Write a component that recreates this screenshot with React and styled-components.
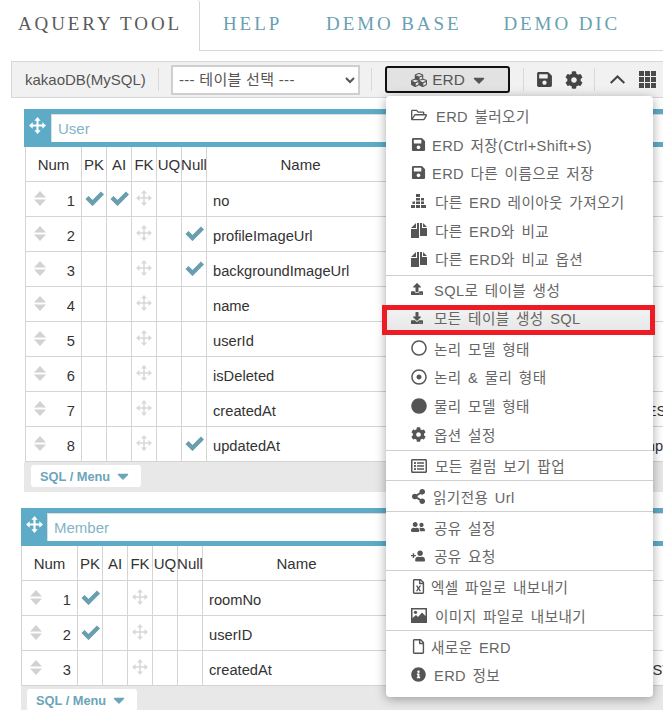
import React from 'react';
import styled, { createGlobalStyle } from 'styled-components';
import {
  FaCaretDown, FaCircle, FaCog, FaCubes, FaDownload, FaInfoCircle, FaRegCircle, FaRegDotCircle,
  FaRegFile, FaRegFileExcel, FaRegFolderOpen, FaRegListAlt, FaSave, FaShareAlt, FaUpload,
  FaUserFriends, FaUserPlus,
} from 'react-icons/fa';

const GlobalStyle = createGlobalStyle`
  html, body { margin: 0; padding: 0; background: #fff; }
  body { font-family: "Liberation Sans", "Noto Sans CJK KR", sans-serif; }
`;

const Page = styled.div`
  width: 663px;
  height: 710px;
  overflow: hidden;
`;

const TabBar = styled.div`
  display: flex;
  height: 51px;
`;

const Tab = styled.div`
  font-family: "Liberation Serif", serif;
  font-size: 19px;
  letter-spacing: 2.9px;
  line-height: 47px;
  white-space: nowrap;
  color: #6a9fb2;
  margin-right: ${(p) => p.$gap}px;
`;

const ActiveTab = styled(Tab)`
  width: 200px;
  margin: 0;
  padding-left: 18px;
  box-sizing: border-box;
  color: #5a5a5a;
  border-right: 1px solid #d6d6d6;
  border-top-right-radius: 3px;
`;

const TabRest = styled.div`
  flex: 1;
  display: flex;
  padding-left: 23px;
  border-bottom: 1px solid #d6d6d6;
`;

const Toolbar = styled.div`
  display: flex;
  align-items: center;
  width: 700px;
  height: 37px;
  box-sizing: border-box;
  margin: 10px 0 0 11px;
  background: #f1f1f1;
  border: 1px solid #d6d6d6;
  color: #555;
  font-size: 15px;
`;

const DbName = styled.span`
  margin-left: 13px;
  width: 133px;
`;

const Divider = styled.span`
  width: 1px;
  height: 23px;
  background: #d8d8d8;
  margin: ${(p) => p.$margin};
`;

const TableSelect = styled.select`
  width: 189px;
  height: 30px;
  box-sizing: border-box;
  background: #fff;
  border: 2px solid #cfcfcf;
  color: #555;
  font-family: "Liberation Sans", "Noto Sans CJK KR", sans-serif;
  font-size: 15px;
  letter-spacing: 0.3px;
  padding-left: 2px;
`;

const Dropdown = styled.div`
  position: relative;
  width: 125px;
`;

const ErdButton = styled.div`
  display: flex;
  align-items: center;
  justify-content: center;
  gap: 5px;
  height: 27px;
  box-sizing: border-box;
  padding-left: 4px;
  background: #e2e2e2;
  border: 2px solid #111;
  border-radius: 3px;
  color: #555;
  font-size: 15.4px;
`;

const ToolIcon = styled.span`
  display: flex;
  color: #444;
  font-size: ${(p) => p.$size}px;
  margin-left: ${(p) => p.$left}px;
`;

const Menu = styled.div`
  position: absolute;
  z-index: 5;
  top: 30px;
  left: 1px;
  width: 267px;
  box-sizing: border-box;
  padding: 5px 0 8px;
  background: #fff;
  border-radius: 4px;
  box-shadow: 0 2px 11px rgba(0, 0, 0, 0.35);
`;

const MenuGroup = styled.div`
  padding: 1px 0 0;
  &:first-child {
    padding: 0 0 1.8px;
  }
  &:nth-child(2) {
    padding: 0;
  }
  &:nth-child(2) > div {
    padding-bottom: 2px;
  }
  & + & {
    border-top: 1px solid #cfcfcf;
  }
`;

const MenuItem = styled.div`
  position: relative;
  display: flex;
  align-items: center;
  height: 28.7px;
  box-sizing: border-box;
  margin-bottom: ${(p) => (p.$marked ? '1.5px' : '0')};
  padding-left: 25px;
  color: #666;
  font-size: 14.6px;
  letter-spacing: 0.4px;
  word-spacing: 2px;
  white-space: nowrap;
  background: ${(p) => (p.$marked ? 'linear-gradient(#f5f5f5, #e6e6e6)' : 'transparent')};
`;

const MenuIcon = styled.span`
  display: flex;
  width: ${(p) => p.$slot}px;
  flex: none;
  color: #555;
  font-size: ${(p) => p.$size || 15}px;
`;

const Callout = styled.div`
  position: absolute;
  left: -4px;
  right: -2px;
  top: 0;
  bottom: -2px;
  border: 5px solid #ed1c24;
`;

const Canvas = styled.div`
  padding-top: 11px;
`;

const Entity = styled.div`
  width: 720px;
  margin-left: ${(p) => p.$left}px;
  margin-bottom: 16px;
`;

const EntityHead = styled.div`
  display: flex;
  align-items: center;
  height: 38px;
  box-sizing: border-box;
  padding-bottom: 1px;
  background: #5eabc7;
`;

const Grip = styled.span`
  display: flex;
  justify-content: center;
  flex: none;
  width: ${(p) => p.$width}px;
  color: #fff;
  margin-top: -4px;
`;

const NameInput = styled.input`
  flex: 1;
  height: 28px;
  box-sizing: border-box;
  padding: 0 6px;
  background: #fff;
  border: 0;
  border-top: 1px solid #ddd;
  border-left: 1px solid #ddd;
  outline: none;
  color: #84b4c6;
  font-family: "Liberation Sans", sans-serif;
  font-size: 15px;
`;

const Rows = styled.div`
  margin-left: ${(p) => p.$inset}px;
  border-left: 1px solid #d4d4d4;
`;

const Row = styled.div`
  display: grid;
  grid-template-columns: 55px 25px 25px 25px 25px 25px 188px 146.5px 1fr;
  height: 35px;
  box-sizing: border-box;
  border-bottom: 1px solid #d4d4d4;
  color: #333;
  font-size: ${(p) => (p.$head ? '15px' : '14.7px')};
`;

const Cell = styled.div`
  display: flex;
  align-items: center;
  justify-content: center;
  white-space: nowrap;
  overflow: hidden;
  border-left: 1px solid #d4d4d4;
  &:first-child {
    border-left: 0;
  }
`;

const TextCell = styled(Cell)`
  justify-content: flex-start;
  padding: 3px 0 0 ${(p) => p.$pad || 0}px;
`;

const HeadCell = styled(Cell)`
  padding-top: 1px;
`;

const NumCell = styled(Cell)`
  justify-content: space-between;
  padding: 0 6px 0 8px;
`;

const Num = styled.span`
  padding-top: 3px;
`;

const SortGlyph = styled.svg`
  width: 12px;
  height: 15px;
  margin-top: -2px;
  fill: #d2d2d2;
`;

const MoveGlyph = styled.svg`
  width: ${(p) => p.$size}px;
  height: ${(p) => p.$size}px;
  margin-top: ${(p) => (p.$light ? '-3px' : '0')};
  color: ${(p) => (p.$light ? '#d8d8d8' : '#fff')};
`;

const CheckGlyph = styled.svg`
  width: 19px;
  height: 16px;
  margin-top: -3px;
  stroke: #689eae;
  stroke-width: 4.4;
  fill: none;
`;

const EntityFoot = styled.div`
  height: ${(p) => p.$height}px;
  padding: 3px 0 0 ${(p) => p.$pad}px;
  box-sizing: border-box;
  background: #e8e8e8;
`;

const SqlMenu = styled.div`
  display: flex;
  align-items: center;
  justify-content: space-between;
  width: 110px;
  height: 22px;
  box-sizing: border-box;
  padding: 0 9px 0 9px;
  background: #fff;
  border-radius: 3px;
  color: #6aa5ba;
  font-size: 12.8px;
  font-weight: bold;
`;

const Flipped = styled.span`
  display: flex;
  transform: scaleX(-1);
`;

const Move = ({ size, light }) => (
  <MoveGlyph $size={size} $light={light} viewBox="0 0 16 16">
    <path d="M8 2V14M2 8H14" stroke="currentColor" strokeWidth={light ? 1.5 : 2} />
    <path d="M8 0L11 3.5H5ZM8 16L11 12.5H5ZM0 8L3.5 5V11ZM16 8L12.5 5V11Z" fill="currentColor" />
  </MoveGlyph>
);

const Check = () => (
  <CheckGlyph viewBox="0 0 19 16">
    <path d="M2 7.5L7.5 13L17.5 3" />
  </CheckGlyph>
);

const Sort = () => (
  <SortGlyph viewBox="0 0 12 15">
    <path d="M0 6.5L6 0L12 6.5ZM0 8.5H12L6 15Z" />
  </SortGlyph>
);

const GridIcon = () => (
  <svg width="17" height="17" viewBox="0 0 17 17" fill="#4a4a4a">
    {[0, 6, 12].map((y) =>
      [0, 6, 12].map((x) => <rect key={`${x}-${y}`} x={x} y={y} width="5" height="5" />)
    )}
  </svg>
);

const ChevronUpThin = () => (
  <svg width="15" height="9" viewBox="0 0 15 9" fill="none" stroke="#444" strokeWidth="2">
    <path d="M0.7 8L7.5 1.5L14.3 8" />
  </svg>
);

const StairsIcon = () => (
  <svg width="15" height="14" viewBox="0 0 15 14" fill="#555">
    <path d="M5 0H9V3H5ZM5 4H9V6.5H5ZM10 4H13V6.5H10ZM1.5 7.5H4V10H1.5ZM5 7.5H9V10H5ZM10 7.5H13V10H10ZM0 11H4V14H0ZM5 11H9V14H5ZM10 11H15V14H10Z" />
  </svg>
);

const DocsIcon = () => (
  <svg width="16" height="16" viewBox="0 0 16 16" fill="#555">
    <path d="M0 6L5 1V6ZM0 7H6V1H8V16H0ZM9 1H11V6H16V14H9ZM12 1L16 5H12Z" />
  </svg>
);

const PictureIcon = () => (
  <svg width="16" height="15" viewBox="0 0 16 15">
    <path fill="#555" d="M0 0H16V15H0Z" />
    <path fill="#fff" d="M1.5 1.5H14.5V8L11 4.5L7 9L5 7L1.5 10Z" />
    <circle fill="#555" cx="4.5" cy="4.3" r="1.6" />
  </svg>
);

const UserPlusLeft = () => (
  <Flipped><FaUserPlus /></Flipped>
);

const menuGroups = [
  [
    { icon: FaRegFolderOpen, slot: 25, size: 16, text: 'ERD 불러오기' },
    { icon: FaSave, slot: 21, text: 'ERD 저장(Ctrl+Shift+S)' },
    { icon: FaSave, slot: 21, text: 'ERD 다른 이름으로 저장' },
    { icon: StairsIcon, slot: 24, text: '다른 ERD 레이아웃 가져오기' },
    { icon: DocsIcon, slot: 24, text: '다른 ERD와 비교' },
    { icon: DocsIcon, slot: 24, text: '다른 ERD와 비교 옵션' },
  ],
  [
    { icon: FaUpload, slot: 23, size: 12, text: 'SQL로 테이블 생성' },
    { icon: FaDownload, slot: 23, size: 12, text: '모든 테이블 생성 SQL', marked: true },
    { icon: FaRegCircle, slot: 23, size: 16, text: '논리 모델 형태' },
    { icon: FaRegDotCircle, slot: 23, size: 16, text: '논리 & 물리 형태' },
    { icon: FaCircle, slot: 23, size: 16, text: '물리 모델 형태' },
    { icon: FaCog, slot: 23, size: 15, text: '옵션 설정' },
  ],
  [{ icon: FaRegListAlt, slot: 24, size: 16, text: '모든 컬럼 보기 팝업' }],
  [{ icon: FaShareAlt, slot: 22, size: 15, text: '읽기전용 Url' }],
  [
    { icon: FaUserFriends, slot: 23, size: 14, text: '공유 설정' },
    { icon: UserPlusLeft, slot: 23, size: 14, text: '공유 요청' },
  ],
  [
    { icon: FaRegFileExcel, slot: 20, size: 15, text: '엑셀 파일로 내보내기' },
    { icon: PictureIcon, slot: 24, text: '이미지 파일로 내보내기' },
  ],
  [
    { icon: FaRegFile, slot: 20, size: 15, text: '새로운 ERD' },
    { icon: FaInfoCircle, slot: 23, size: 15, text: 'ERD 정보' },
  ],
];

const userRows = [
  { name: 'no', pk: true, ai: true },
  { name: 'profileImageUrl', nil: true },
  { name: 'backgroundImageUrl', nil: true },
  { name: 'name' },
  { name: 'userId' },
  { name: 'isDeleted' },
  { name: 'createdAt', extra: 'CURRENT_TIMESTAMP' },
  { name: 'updatedAt', nil: true, extra: 'current_timestamp' },
];

const memberRows = [
  { name: 'roomNo', pk: true },
  { name: 'userID', pk: true },
  { name: 'createdAt', extra: 'CURRENT_TIMESTAMP' },
];

const HeaderRow = () => (
  <Row $head>
    <HeadCell>Num</HeadCell>
    <HeadCell>PK</HeadCell>
    <HeadCell>AI</HeadCell>
    <HeadCell>FK</HeadCell>
    <HeadCell>UQ</HeadCell>
    <HeadCell>Null</HeadCell>
    <HeadCell>Name</HeadCell>
    <Cell />
    <Cell />
  </Row>
);

const Table = ({ title, rows, left, inset, grip, footHeight, footPad }) => (
  <Entity $left={left}>
    <EntityHead>
      <Grip $width={grip}><Move size={17} /></Grip>
      <NameInput defaultValue={title} readOnly />
    </EntityHead>
    <Rows $inset={inset}>
      <HeaderRow />
      {rows.map((row, i) => (
        <Row key={row.name}>
          <NumCell><Sort /><Num>{i + 1}</Num></NumCell>
          <Cell>{row.pk && <Check />}</Cell>
          <Cell>{row.ai && <Check />}</Cell>
          <Cell><Move size={16} light /></Cell>
          <Cell />
          <Cell>{row.nil && <Check />}</Cell>
          <TextCell $pad={6}>{row.name}</TextCell>
          <Cell />
          <TextCell>{row.extra}</TextCell>
        </Row>
      ))}
    </Rows>
    <EntityFoot $height={footHeight} $pad={footPad}>
      <SqlMenu>SQL / Menu <FaCaretDown size={18} /></SqlMenu>
    </EntityFoot>
  </Entity>
);

const App = () => (
  <Page>
    <GlobalStyle />
    <TabBar>
      <ActiveTab>AQUERY TOOL</ActiveTab>
      <TabRest>
        <Tab $gap={44}>HELP</Tab>
        <Tab $gap={42}>DEMO BASE</Tab>
        <Tab>DEMO DIC</Tab>
      </TabRest>
    </TabBar>
    <Toolbar>
      <DbName>kakaoDB(MySQL)</DbName>
      <Divider $margin="0 12px 0 0" />
      <TableSelect defaultValue="none">
        <option value="none">--- 테이블 선택 ---</option>
      </TableSelect>
      <Divider $margin="0 13px 0 11px" />
      <Dropdown>
        <ErdButton><FaCubes size={16} /> ERD <FaCaretDown size={18} /></ErdButton>
        <Menu>
          {menuGroups.map((group, g) => (
            <MenuGroup key={g}>
              {group.map((item) => (
                <MenuItem key={item.text} $marked={item.marked}>
                  <MenuIcon $slot={item.slot} $size={item.size}><item.icon /></MenuIcon>
                  {item.text}
                  {item.marked && <Callout />}
                </MenuItem>
              ))}
            </MenuGroup>
          ))}
        </Menu>
      </Dropdown>
      <Divider $margin="0 0 0 13px" />
      <ToolIcon $size={17} $left={12}><FaSave /></ToolIcon>
      <ToolIcon $size={18} $left={12}><FaCog /></ToolIcon>
      <Divider $margin="0 0 0 11px" />
      <ToolIcon $size={15} $left={15}><ChevronUpThin /></ToolIcon>
      <ToolIcon $size={18} $left={14}><GridIcon /></ToolIcon>
    </Toolbar>
    <Canvas>
      <Table title="User" rows={userRows} left={24} inset={1} grip={27} footHeight={30} footPad={7} />
      <Table title="Member" rows={memberRows} left={21} inset={0} grip={26} footHeight={30} footPad={6} />
    </Canvas>
  </Page>
);

export default App;
